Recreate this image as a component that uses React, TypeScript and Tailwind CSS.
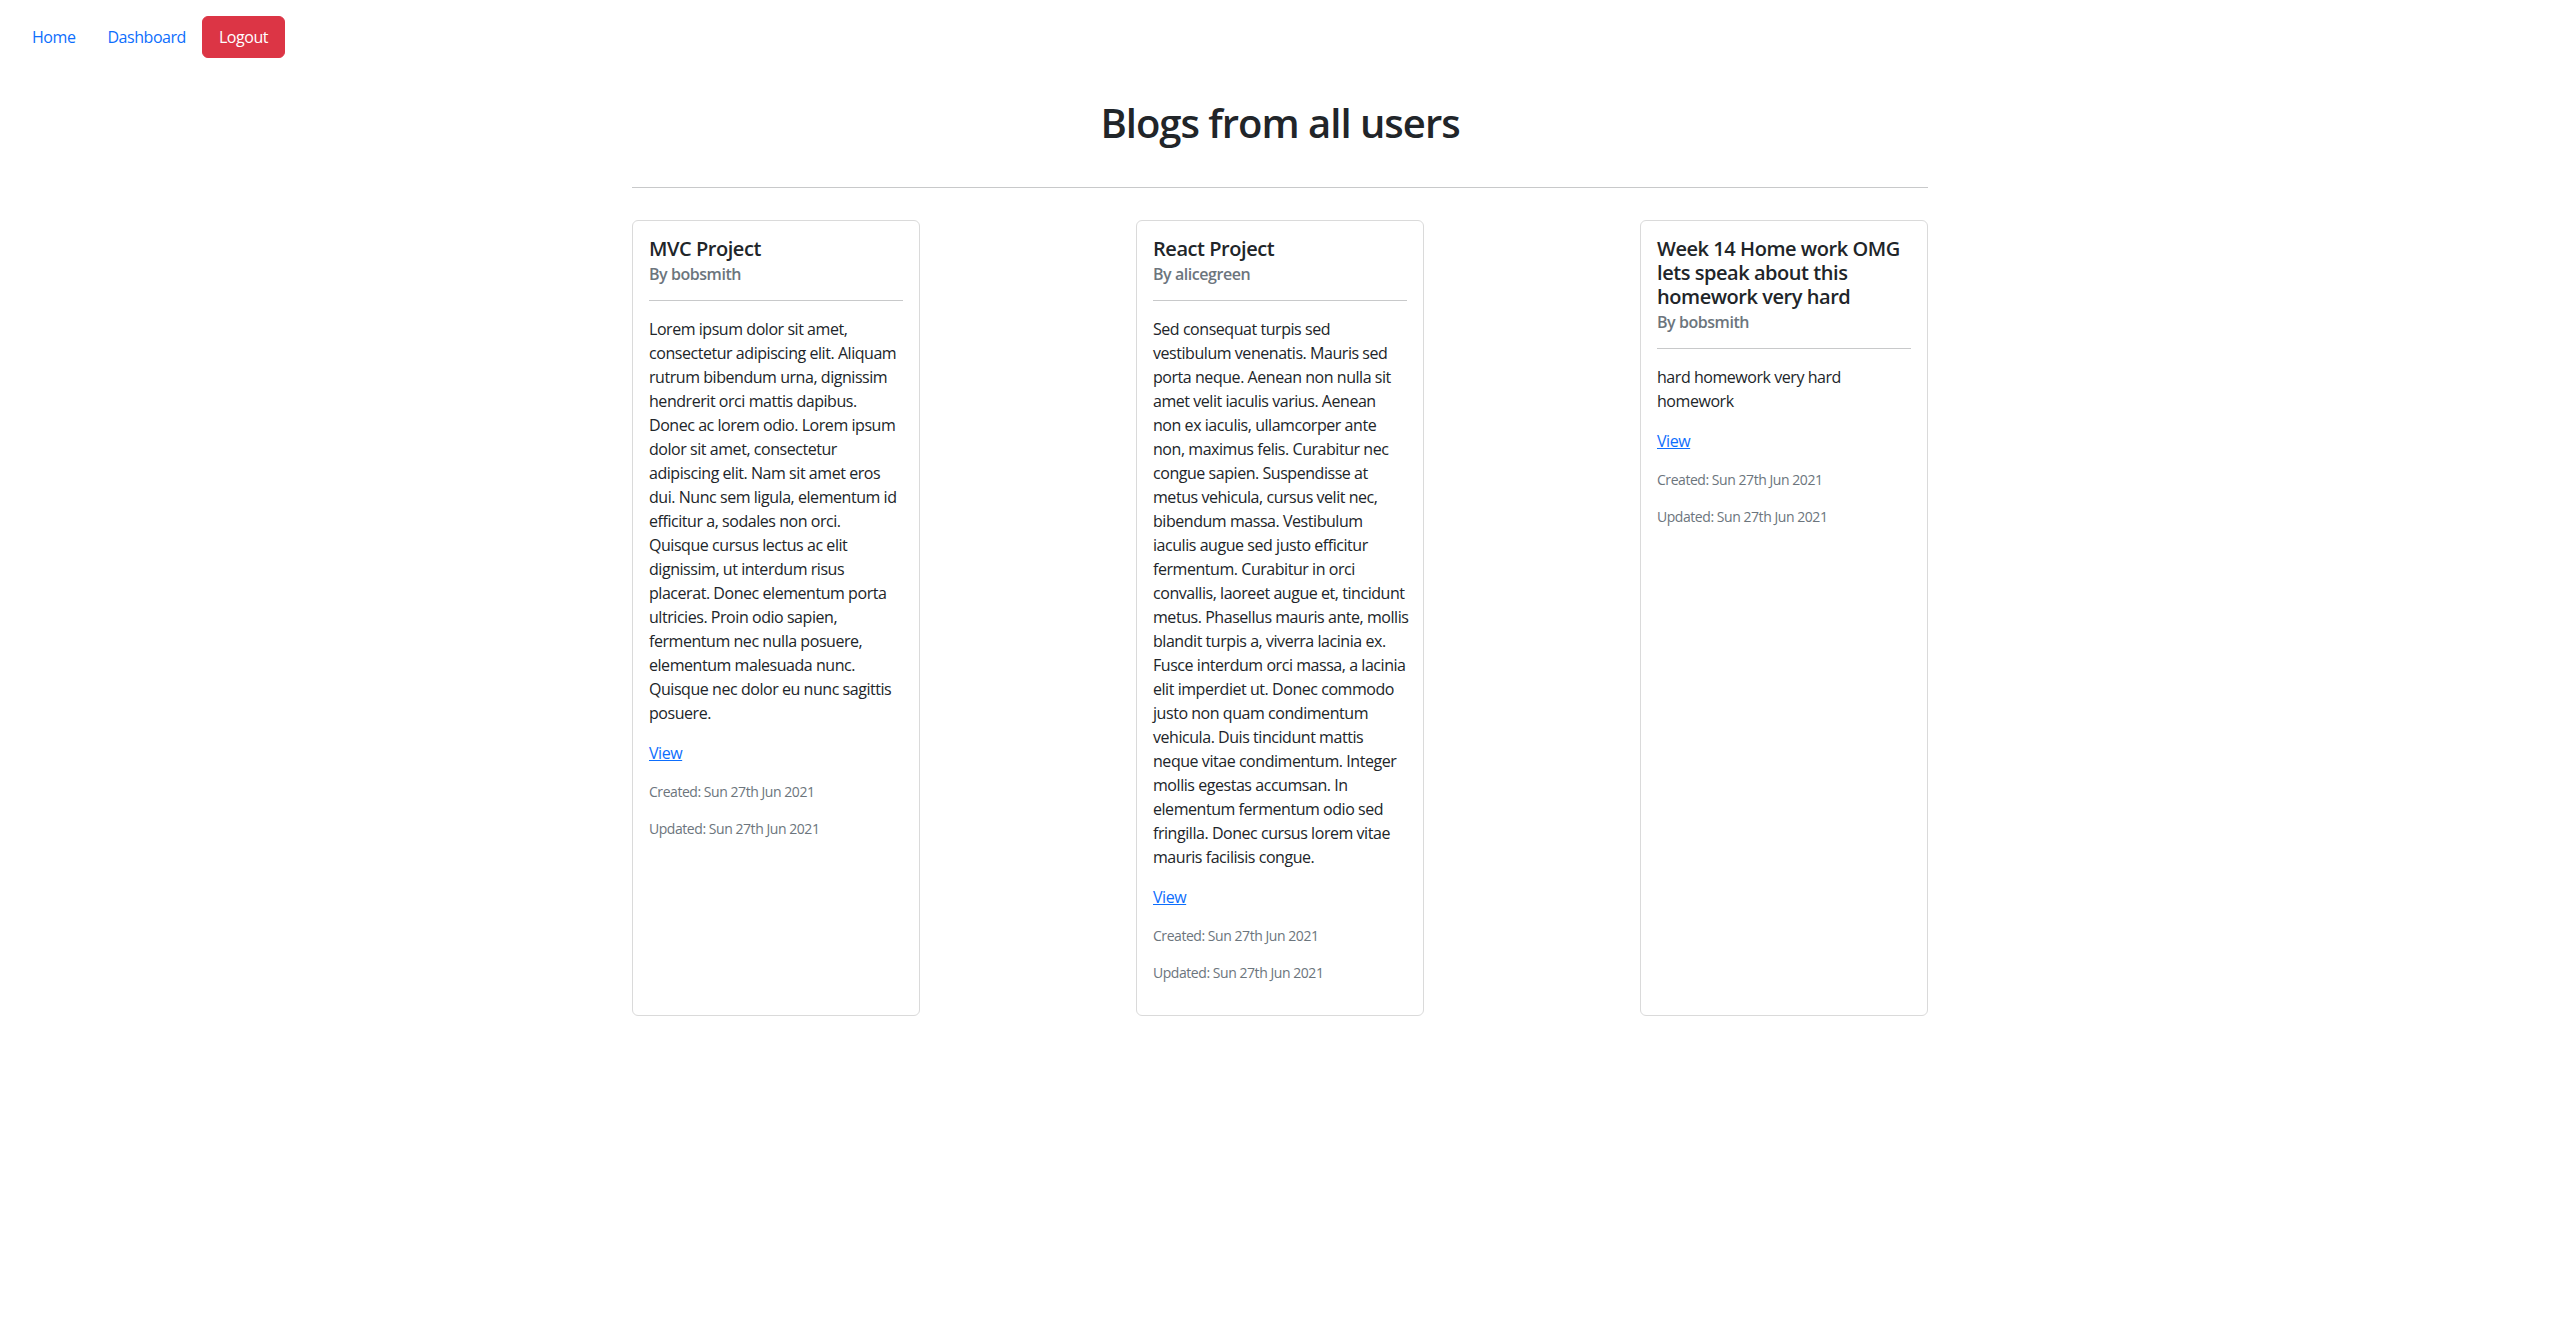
const posts = [
  {
    title: ["MVC Project"],
    author: "bobsmith",
    body: [
      "Lorem ipsum dolor sit amet,",
      "consectetur adipiscing elit. Aliquam",
      "rutrum bibendum urna, dignissim",
      "hendrerit orci mattis dapibus.",
      "Donec ac lorem odio. Lorem ipsum",
      "dolor sit amet, consectetur",
      "adipiscing elit. Nam sit amet eros",
      "dui. Nunc sem ligula, elementum id",
      "efficitur a, sodales non orci.",
      "Quisque cursus lectus ac elit",
      "dignissim, ut interdum risus",
      "placerat. Donec elementum porta",
      "ultricies. Proin odio sapien,",
      "fermentum nec nulla posuere,",
      "elementum malesuada nunc.",
      "Quisque nec dolor eu nunc sagittis",
      "posuere.",
    ],
  },
  {
    title: ["React Project"],
    author: "alicegreen",
    body: [
      "Sed consequat turpis sed",
      "vestibulum venenatis. Mauris sed",
      "porta neque. Aenean non nulla sit",
      "amet velit iaculis varius. Aenean",
      "non ex iaculis, ullamcorper ante",
      "non, maximus felis. Curabitur nec",
      "congue sapien. Suspendisse at",
      "metus vehicula, cursus velit nec,",
      "bibendum massa. Vestibulum",
      "iaculis augue sed justo efficitur",
      "fermentum. Curabitur in orci",
      "convallis, laoreet augue et, tincidunt",
      "metus. Phasellus mauris ante, mollis",
      "blandit turpis a, viverra lacinia ex.",
      "Fusce interdum orci massa, a lacinia",
      "elit imperdiet ut. Donec commodo",
      "justo non quam condimentum",
      "vehicula. Duis tincidunt mattis",
      "neque vitae condimentum. Integer",
      "mollis egestas accumsan. In",
      "elementum fermentum odio sed",
      "fringilla. Donec cursus lorem vitae",
      "mauris facilisis congue.",
    ],
  },
  {
    title: ["Week 14 Home work OMG", "lets speak about this", "homework very hard"],
    author: "bobsmith",
    body: ["hard homework very hard", "homework"],
  },
];

function BlogCard({ post }: { post: (typeof posts)[number] }) {
  return (
    <div className="w-[288px] rounded-md border border-[#dadada] bg-white p-4">
      <h5 className="mb-2 text-[20px] font-semibold leading-[24px] text-[#212529]">
        {post.title.map((t) => (
          <span key={t} className="block whitespace-nowrap">
            {t}
          </span>
        ))}
      </h5>
      <h6 className="-mt-1 text-[16px] font-semibold leading-[19px] text-[#6c757d]">By {post.author}</h6>
      <hr className="my-4 border-t border-[#c8c9ca]" />
      <p className="mb-4 text-[16px] leading-6">
        {post.body.map((l) => (
          <span key={l} className="block whitespace-nowrap">
            {l}
          </span>
        ))}
      </p>
      <p className="mb-4 text-[16px] leading-6">
        <a href="#" className="text-[#0d6efd] underline">
          View
        </a>
      </p>
      <p className="mb-4 text-[14px] leading-[21px] text-[#6c757d]">Created: Sun 27th Jun 2021</p>
      <p className="mb-4 text-[14px] leading-[21px] text-[#6c757d]">Updated: Sun 27th Jun 2021</p>
    </div>
  );
}

export default function App() {
  return (
    <div className="min-h-screen bg-white font-['Open_Sans',sans-serif] tracking-[-0.45px] text-[#212529]">
      <nav className="flex items-center p-4 text-[16px] leading-6">
        <a href="#" className="px-4 py-2 text-[#0d6efd]">
          Home
        </a>
        <a href="#" className="px-4 py-2 text-[#0d6efd]">
          Dashboard
        </a>
        <a href="#" className="rounded-md border border-[#dc3545] bg-[#dc3545] px-4 py-2 text-white">
          Logout
        </a>
      </nav>
      <main className="mx-auto w-[1296px]">
        <h1 className="mt-[25px] text-center text-[40px] font-semibold leading-[48px] tracking-[-1px]">
          Blogs from all users
        </h1>
        <hr className="mt-[40px] mb-4 border-t border-[#c8c9ca]" />
        <div className="mt-[32px] flex items-stretch justify-between">
          {posts.map((p) => (
            <BlogCard key={p.title[0]} post={p} />
          ))}
        </div>
      </main>
    </div>
  );
}
